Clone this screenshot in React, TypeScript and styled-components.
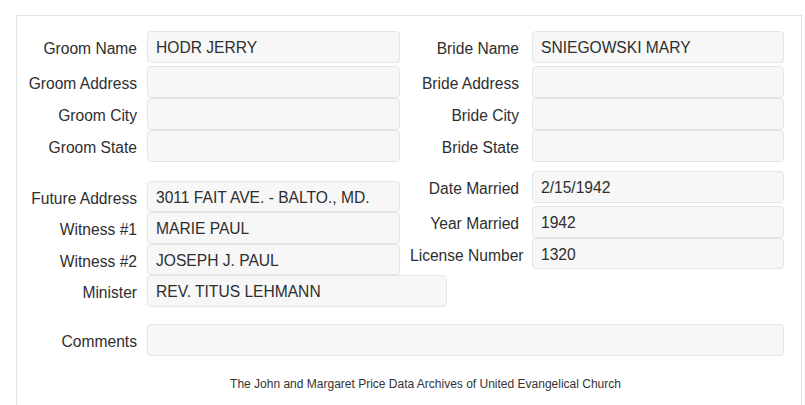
import styled, { createGlobalStyle } from 'styled-components';

const GlobalStyle = createGlobalStyle`
  body {
    margin: 0;
    background: #ffffff;
    font-family: 'Liberation Sans', Arial, sans-serif;
    color: #333333;
  }
`;

const Page = styled.div`
  width: 805px;
  height: 405px;
  overflow: hidden;
  padding: 15px 3px 0 16px;
  box-sizing: border-box;
`;

const Panel = styled.section`
  border: 1px solid #e3e3e3;
  border-bottom: none;
  padding: 15px 17px 40px 10px;
  min-height: 400px;
  box-sizing: border-box;
`;

const Columns = styled.div`
  display: flex;
  gap: 10px;
`;

type HalfProp = {
  top?: number;
};

const Half = styled.div<HalfProp>`
  display: flex;
  flex-direction: column;
  width: 373px;
  padding-top: ${(props) => props.top || 0}px;
  &:last-child {
    flex: 1;
  }
`;

type RowProp = {
  gap?: number;
};

const Row = styled.div<RowProp>`
  display: flex;
  align-items: center;
  margin-bottom: ${(props) => props.gap || 0}px;
`;

type LabelProp = {
  width: number;
  space: number;
};

const Label = styled.label<LabelProp>`
  flex: none;
  width: ${(props) => props.width}px;
  margin-right: ${(props) => props.space}px;
  text-align: right;
  white-space: nowrap;
  font-size: 15.6px;
  color: #2e2e2e;
  padding-top: 4px;
`;

type BoxProp = {
  h?: number;
  w?: number;
};

const Box = styled.div<BoxProp>`
  box-sizing: border-box;
  height: ${(props) => props.h || 32}px;
  width: ${(props) => (props.w ? `${props.w}px` : 'auto')};
  flex: ${(props) => (props.w ? 'none' : '1')};
  background: #f7f7f7;
  border: 1px solid #e5e5e5;
  border-radius: 4px;
  padding: 2px 8px 0 8px;
  display: flex;
  align-items: center;
  font-size: 15.6px;
  color: #2e2e2e;
  white-space: nowrap;
`;

const CommentsRow = styled.div`
  display: flex;
  align-items: center;
  margin-top: 17px;
`;

const Footer = styled.div`
  text-align: center;
  font-size: 12px;
  color: #333333;
  margin-top: 21px;
  padding-left: 40px;
`;

const left1 = [
  { label: 'Groom Name', value: 'HODR JERRY' },
  { label: 'Groom Address', value: '' },
  { label: 'Groom City', value: '' },
  { label: 'Groom State', value: '' },
];

const right1 = [
  { label: 'Bride Name', value: 'SNIEGOWSKI MARY' },
  { label: 'Bride Address', value: '' },
  { label: 'Bride City', value: '' },
  { label: 'Bride State', value: '' },
];

function App() {
  return (
    <>
      <GlobalStyle />
      <Page>
        <Panel>
          <Columns>
            <Half>
              {left1.map(({ label, value }, i) => (
                <Row key={label} gap={i === 0 ? 3 : 0}>
                  <Label width={110} space={10}>
                    {label}
                  </Label>
                  <Box>{value}</Box>
                </Row>
              ))}
            </Half>
            <Half>
              {right1.map(({ label, value }, i) => (
                <Row key={label} gap={i === 0 ? 3 : 0}>
                  <Label width={109} space={13}>
                    {label}
                  </Label>
                  <Box>{value}</Box>
                </Row>
              ))}
            </Half>
          </Columns>
          <Columns>
            <Half top={19}>
              <Row>
                <Label width={110} space={10}>
                  Future Address
                </Label>
                <Box h={31}>3011 FAIT AVE. - BALTO., MD.</Box>
              </Row>
              <Row>
                <Label width={110} space={10}>
                  Witness #1
                </Label>
                <Box h={32}>MARIE PAUL</Box>
              </Row>
              <Row>
                <Label width={110} space={10}>
                  Witness #2
                </Label>
                <Box h={31}>JOSEPH J. PAUL</Box>
              </Row>
              <Row>
                <Label width={110} space={10}>
                  Minister
                </Label>
                <Box h={32} w={300}>
                  REV. TITUS LEHMANN
                </Box>
              </Row>
            </Half>
            <Half top={9}>
              <Row gap={3}>
                <Label width={109} space={13}>
                  Date Married
                </Label>
                <Box h={32}>2/15/1942</Box>
              </Row>
              <Row>
                <Label width={109} space={13}>
                  Year Married
                </Label>
                <Box h={32}>1942</Box>
              </Row>
              <Row>
                <Label width={109} space={13}>
                  License Number
                </Label>
                <Box h={31}>1320</Box>
              </Row>
            </Half>
          </Columns>
          <CommentsRow>
            <Label width={110} space={10}>
              Comments
            </Label>
            <Box h={32} />
          </CommentsRow>
          <Footer>The John and Margaret Price Data Archives of United Evangelical Church</Footer>
        </Panel>
      </Page>
    </>
  );
}

export default App;
